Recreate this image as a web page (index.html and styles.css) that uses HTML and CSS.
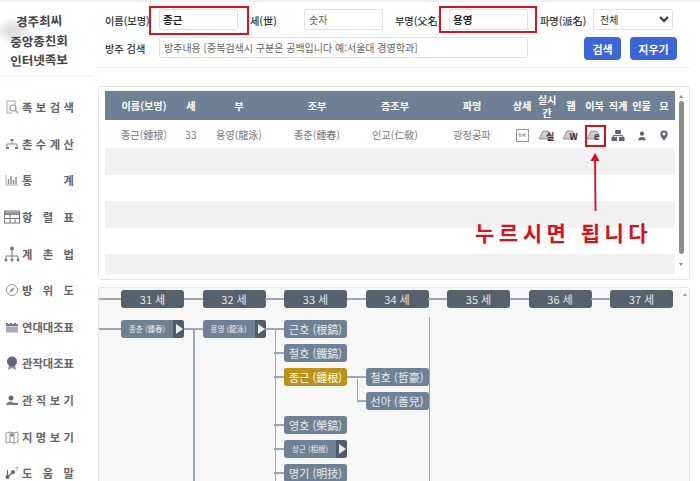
FILE: index.html
```html
<!DOCTYPE html>
<html lang="ko">
<head>
<meta charset="utf-8">
<title>인터넷족보</title>
<link rel="stylesheet" href="styles.css">
</head>
<body>
<div class="page">
  <aside class="side">
    <div class="logo">
      <span class="smudge"></span>
      <p class="logo-line">경주최씨</p>
      <p class="logo-line">중앙종친회</p>
      <p class="logo-line">인터넷족보</p>
    </div>
    <nav class="menu">
      <a class="item"><svg class="ico" viewBox="0 0 14 14"><path d="M2 1h8v5M2 1v12h5" fill="none" stroke="#aaa" stroke-width="1"/><circle cx="8" cy="8" r="3" fill="none" stroke="#999" stroke-width="1.2"/><path d="M10 10l3 3" stroke="#999" stroke-width="1.4"/></svg><span class="lab">족 보 검 색</span></a>
      <a class="item"><svg class="ico" viewBox="0 0 14 14"><path d="M7 3v4M2 11V7h10v4" fill="none" stroke="#888" stroke-width="1"/><rect x="5.500" y="2" width="3" height="2" fill="#777"/><rect x="1" y="10" width="3" height="2" fill="#777"/><rect x="10" y="10" width="3" height="2" fill="#777"/></svg><span class="lab">촌 수 계 산</span></a>
      <a class="item"><svg class="ico" viewBox="0 0 14 14"><path d="M1 2v10h12" fill="none" stroke="#aaa"/><path d="M3.500 11V6M6 11V3M8.500 11V7M11 11V4" stroke="#889" stroke-width="1.400"/></svg><span class="lab">통 계</span></a>
      <a class="item"><svg class="ico ico-w" viewBox="0 0 16 14"><rect x=".5" y="1" width="15" height="12" fill="#fff" stroke="#777"/><path d="M.5 4.500h15M.5 8.500h15M6 4.500V13M11 8.500V13" stroke="#777" fill="none"/><rect x="1" y="1.500" width="14" height="3" fill="#999"/></svg><span class="lab">항 렬 표</span></a>
      <a class="item"><svg class="ico ico-w" viewBox="0 0 16 16"><circle cx="8" cy="2.500" r="2" fill="#778"/><path d="M8 4v6M2 13v-3h12v3M8 10v3" fill="none" stroke="#778"/><circle cx="2" cy="14" r="1.500" fill="#778"/><circle cx="8" cy="14" r="1.500" fill="#778"/><circle cx="14" cy="14" r="1.500" fill="#778"/></svg><span class="lab">계 촌 법</span></a>
      <a class="item"><svg class="ico" viewBox="0 0 14 14"><circle cx="7" cy="7" r="5.500" fill="none" stroke="#999"/><path d="M10 4L8 8 4 10 6 6z" fill="#999"/></svg><span class="lab">방 위 도</span></a>
      <a class="item"><svg class="ico" viewBox="0 0 14 14"><path d="M1 6V3h2v1h2V3h2v1h2V3h2v1h2v2z" fill="#778"/><rect x="1" y="6.500" width="12" height="6" fill="#aab"/></svg><span class="lab">연대대조표</span></a>
      <a class="item"><svg class="ico" viewBox="0 0 14 14"><path d="M4 8l-1 6 4-2 4 2-1-6z" fill="#8a97a5"/><circle cx="7" cy="5.500" r="5" fill="#667"/></svg><span class="lab">관작대조표</span></a>
      <a class="item"><svg class="ico" viewBox="0 0 14 14"><circle cx="6" cy="5" r="2.500" fill="#667"/><path d="M1 12c0-2 3-3.500 5-3.500l2 1 5 .5v2z" fill="#778"/></svg><span class="lab">관 직 보 기</span></a>
      <a class="item"><svg class="ico" viewBox="0 0 14 14"><path d="M1 3l4-1 4 1 4-1v10l-4 1-4-1-4 1zM5 2v10M9 3v10" fill="none" stroke="#999"/><circle cx="7" cy="5" r="1.800" fill="#888"/></svg><span class="lab">지 명 보 기</span></a>
      <a class="item"><svg class="ico" viewBox="0 0 14 14"><circle cx="2.500" cy="11" r="2" fill="#667"/><circle cx="8" cy="6" r="2" fill="#667"/><path d="M2.500 4v7M2.500 11L8 6" stroke="#667" stroke-width="1.200"/><text class="help" x="10" y="5">?</text></svg><span class="lab">도 움 말</span></a>
    </nav>
  </aside>

  <main class="main">
    <form class="search">
      <label class="fl first">이름(보명)</label>
      <span class="hl hl-a"><input class="inp inp-b" value="종근"></span>
      <label class="fl">세(世)</label>
      <input class="inp" placeholder="숫자">
      <label class="fl">부명(父名)</label>
      <span class="hl hl-b"><input class="inp inp-b" value="용영"></span>
      <label class="fl">파명(派名)</label>
      <select class="sel"><option>전체</option></select>
      <label class="fl first">방주 검색</label>
      <input class="inp wide" placeholder="방주내용 [중복검색시 구분은 공백입니다 예:서울대 경영학과]">
      <div class="btns">
        <button type="button" class="btn btn-s">검색</button>
        <button type="button" class="btn btn-c">지우기</button>
      </div>
    </form>

    <section class="card result">
      <div class="scroll">
        <table class="tbl">
          <colgroup>
            <col class="w78"><col class="w16"><col class="w80"><col class="w76"><col class="w80"><col class="w74"><col class="w26"><col class="w24"><col class="w24"><col class="w23"><col class="w24"><col class="w23"><col class="w22">
          </colgroup>
          <thead>
            <tr><th>이름(보명)</th><th>세</th><th>부</th><th>조부</th><th>증조부</th><th>파명</th><th>상세</th><th>실시간</th><th>웹</th><th>이북</th><th>직계</th><th>인물</th><th>묘</th></tr>
          </thead>
          <tbody>
            <tr class="first-row">
              <td>종근(鍾根)</td><td>33</td><td>용영(龍泳)</td><td>종춘(鍾春)</td><td>인교(仁敎)</td><td>광정공파</td>
              <td><span class="doc">상세</span></td>
              <td><svg class="bk bk-book" viewBox="0 0 16 14"><path d="M0 11L4 3h5l3 3v5z" fill="#ccc" stroke="#777" stroke-width=".7"/><text class="bk-l" x="7" y="12">실</text></svg></td>
              <td><svg class="bk bk-book" viewBox="0 0 16 14"><path d="M0 11L4 3h5l3 3v5z" fill="#ccc" stroke="#777" stroke-width=".7"/><text class="bk-l" x="6.500" y="12">W</text></svg></td>
              <td><svg class="bk bk-book" viewBox="0 0 16 14"><path d="M0 11L4 3h5l3 3v5z" fill="#ccc" stroke="#777" stroke-width=".7"/><text class="bk-l" x="7" y="12">e</text></svg></td>
              <td><svg class="bk" viewBox="0 0 14 14"><rect x="4" y="1" width="6" height="4.500" fill="#5c6673"/><path d="M2 9V7h10v2" fill="none" stroke="#5c6673"/><rect y="8.500" width="6" height="4.500" fill="#5c6673"/><rect x="8" y="8.500" width="6" height="4.500" fill="#5c6673"/></svg></td>
              <td><svg class="bk" viewBox="0 0 14 14"><circle cx="7" cy="5" r="2.300" fill="#5c6673"/><path d="M3 12c0-2.500 1.800-3.500 4-3.500s4 1 4 3.500z" fill="#5c6673"/></svg></td>
              <td><svg class="bk" viewBox="0 0 14 14"><path d="M7 1.500a4 4 0 0 1 4 4C11 8.500 7 12.500 7 12.500S3 8.500 3 5.500a4 4 0 0 1 4-4z" fill="#5c6673"/><circle cx="7" cy="5.500" r="1.600" fill="#fff"/></svg></td>
            </tr>
            <tr class="empty"><td colspan="13"></td></tr>
            <tr class="empty"><td colspan="13"></td></tr>
            <tr class="empty"><td colspan="13"></td></tr>
            <tr class="empty"><td colspan="13"></td></tr>
            <tr class="empty"><td colspan="13"></td></tr>
          </tbody>
        </table>
      </div>
      <div class="sbar"><span class="arr up"></span><span class="thumb"></span><span class="arr down"></span></div>
    </section>

    <section class="card tree">
      <div class="tree-grid">
        <div class="yr">31 세</div><div class="yr">32 세</div><div class="yr">33 세</div><div class="yr">34 세</div><div class="yr">35 세</div><div class="yr">36 세</div><div class="yr">37 세</div>
      </div>
      <div class="node-grid">
        <span class="vl vl1"></span><span class="vl vl2"></span><span class="vl vl3"></span><span class="vl vl4"></span>
        <div class="nd more c1 r1"><span class="nm">종춘 (鍾春)</span><i class="go"></i></div>
        <div class="nd more c2 r1"><span class="nm">용영 (龍泳)</span><i class="go"></i></div>
        <div class="nd c3 r1">근호 (根鎬)</div>
        <div class="nd c3 r2">철호 (鐵鎬)</div>
        <div class="nd gold c3 r3">종근 (鍾根)</div>
        <div class="nd c4 r3">철호 (哲豪)</div>
        <div class="nd c4 r4">선아 (善兒)</div>
        <div class="nd c3 r5">영호 (榮鎬)</div>
        <div class="nd more c3 r6"><span class="nm">상근 (相根)</span><i class="go"></i></div>
        <div class="nd c3 r7">명기 (明技)</div>
      </div>
      <span class="tree-up"></span>
    </section>

    <div class="callout">
      <span class="ebook-box"></span>
      <svg class="arrow" viewBox="0 0 12 58"><path d="M6 6l.5 52" stroke="#d8101a" stroke-width="1.800" fill="none"/><path d="M6 0L1.500 8h9z" fill="#d8101a"/></svg>
      <p class="note">누르시면 됩니다</p>
    </div>
  </main>
</div>
</body>
</html>
```
FILE: styles.css
```css
*, *::before, *::after { box-sizing: border-box; }
html, body { margin: 0; padding: 0; background: #fff; }
body {
  width: 700px; height: 481px; overflow: hidden;
  font-family: "Noto Sans CJK KR", "Noto Sans", sans-serif;
  color: #444;
  border-top: 2px solid #f1f1f1;
}
.page { display: flex; height: 479px; }

/* sidebar */
.side { width: 92px; flex: none; }
.logo {
  position: relative; height: 75px; padding: 9px 0 0 9px;
  border-bottom: 2px solid #f2f2f2;
}
.smudge {
  position: absolute; left: 0; top: 20px; width: 26px; height: 18px;
  background: #ccc; border-radius: 50%; filter: blur(4px); opacity: .7;
}
.logo-line {
  position: relative; margin: 0; height: 19.500px; line-height: 19.500px;
  font-size: 12.500px; font-weight: 700; color: #444; text-align: center; width: 60px;
  white-space: nowrap; transform: rotate(-2deg);
}
.menu { display: flex; flex-direction: column; padding: 12px 0 0 5px; }
.item { display: flex; align-items: center; height: 36.600px; gap: 3px; color: #555; }
.ico { width: 14px; height: 14px; flex: none; }
.ico-w { width: 16px; height: 16px; margin-left: -1px; margin-right: -1px; }
.help { font-size: 6px; fill: #777; font-family: "Liberation Sans", sans-serif; }
.lab {
  width: 52px; font-size: 11.300px; font-weight: 700; color: #666; line-height: 16px;
  text-align: justify; text-align-last: justify;
}

/* main */
.main { position: relative; flex: 1; padding-left: 6px; min-width: 0; }
.search {
  display: grid; margin-right: 10px; padding: 7px 0 0 7px; height: 66px;
  grid-template-columns: 54px 79px 66px 79px 66px 79px 65px 84px;
  grid-auto-rows: 21px; row-gap: 7px;
  border-bottom: 1px solid #f0f0f0;
}
.fl { font-size: 10.200px; font-weight: 500; color: #333; line-height: 23px; padding-left: 12px; white-space: nowrap; }
.fl.first { padding-left: 0; }
.inp {
  display: block; width: 79px; height: 21px; padding: 0 4px; margin: 0;
  border: 1px solid #e2e2e2; border-radius: 2px; background: #fff;
  font: 10px "Noto Sans CJK KR", sans-serif; color: #333; outline: 0;
}
.inp::placeholder { color: #666; opacity: 1; }
.inp-b { font-weight: 700; font-size: 10.500px; color: #222; padding-left: 3px; }
.wide { grid-column: 2 / span 5; width: 369px; }
.hl { position: relative; display: block; width: 79px; height: 21px; }
.hl::after { content: ""; position: absolute; border: 2px solid #d8141c; }
.hl-a::after { left: -10px; top: -3px; width: 100px; height: 29px; }
.hl-b::after { left: -10px; top: -3px; width: 98px; height: 27px; }
.sel {
  width: 80px; height: 21px; padding: 0 2px; border: 1px solid #e2e2e2; border-radius: 2px;
  background: #fff; font: 10px "Noto Sans CJK KR", sans-serif; color: #333;
}
.btns { grid-column: 7 / span 2; display: flex; justify-content: flex-end; gap: 9px; height: 23px; }
.btn {
  height: 23px; padding: 0; border: 0; border-radius: 4px; color: #fff;
  font: 700 11px "Noto Sans CJK KR", sans-serif; background: #3c65d8;
}
.btn-s { width: 37px; }
.btn-c { width: 47px; }

/* cards */
.card { border: 1px solid #e4e4e4; border-radius: 3px; background: #fff; width: 592px; }
.result { display: flex; height: 194px; margin-top: 18px; padding: 4px 0 5px 6px; }
.scroll { width: 571px; height: 183px; overflow: hidden; flex: none; }
.tbl { width: 570px; table-layout: fixed; border-collapse: collapse; }
.w78 { width: 78px; } .w16 { width: 16px; } .w80 { width: 80px; } .w76 { width: 76px; }
.w74 { width: 74px; } .w26 { width: 26px; } .w24 { width: 24px; } .w23 { width: 23px; } .w22 { width: 22px; }
.tbl th {
  height: 29px; padding: 0; background: #6e8093; color: #fff;
  font-size: 10.200px; font-weight: 700; line-height: 13px;
}
.tbl td { padding: 0; text-align: center; font-size: 10.200px; color: #7a7a7a; white-space: nowrap; }
.first-row td { height: 28px; }
.empty td { height: 26.500px; background: #f1f1f1; }
.empty:nth-child(odd) td { background: #fff; }
.doc {
  display: inline-block; width: 13px; height: 13px; border: 1px solid #999; vertical-align: middle;
  font-size: 4px; line-height: 11px; color: #555; background: #fff;
}
.bk { width: 14px; height: 13px; vertical-align: middle; }
.bk-book { width: 16px; height: 14px; }
.bk-l { font: 700 9px "Noto Sans CJK KR", sans-serif; fill: #333; }

.sbar { flex: none; width: 10px; display: flex; flex-direction: column; align-items: center; }
.thumb { width: 5px; height: 153px; background: #8c8c8c; border-radius: 3px; margin: 3px 0 9px; }
.arr { width: 0; height: 0; border-left: 2.500px solid transparent; border-right: 2.500px solid transparent; }
.up { border-bottom: 3px solid #888; margin-top: 4px; }
.down { border-top: 3px solid #888; }

/* tree */
.tree {
  position: relative; height: 200px; margin-top: 7px; padding: 2px 0 0 22px; background: #f7f7f7;
  overflow: hidden;
}
.tree-grid, .node-grid {
  position: relative; display: grid; column-gap: 18.500px;
  grid-template-columns: repeat(7, 63px);
}
.yr {
  position: relative; height: 18px; line-height: 18px; text-align: center;
  background: #56616e; border-radius: 3px; color: #e8e8e8; font-size: 11px;
}
.yr::before {
  content: ""; position: absolute; left: -19px; top: 8px; width: 19px; height: 1.500px; background: #9aa8b5;
}
.yr:first-child::before { left: -22px; width: 22px; }
.node-grid { margin-top: 12px; grid-auto-rows: 18px; row-gap: 6px; }
.nd {
  position: relative; display: flex; align-items: center; justify-content: center;
  height: 18px; line-height: 14px; background: #6f8295; border-radius: 3px; color: #e9edf0; font-size: 11px; white-space: nowrap;
}
.nd::before {
  content: ""; position: absolute; left: -10px; top: 8px; width: 10px; height: 1.500px; background: #9aa8b5;
}
.nd.c1::before { left: -22px; width: 22px; }
.nd.c2::before, .c3.r1::before, .c4.r3::before { left: -19px; width: 19px; }
.nd.c4.r4::before { left: -9px; width: 9px; }
.gold { background: #bd9216; color: #fff; }
.more { justify-content: flex-start; }
.nm { flex: 1; text-align: center; font-size: 7.500px; }
.go {
  position: relative; align-self: stretch; width: 11px; background: #4f5c6b; border-radius: 0 3px 3px 0;
}
.go::after {
  content: ""; position: absolute; left: 3px; top: 4px;
  border-left: 7px solid #e9edf0; border-top: 5px solid transparent; border-bottom: 5px solid transparent;
}
.c1 { grid-column: 1; } .c2 { grid-column: 2; } .c3 { grid-column: 3; } .c4 { grid-column: 4; }
.r1 { grid-row: 1; } .r2 { grid-row: 2; } .r3 { grid-row: 3; } .r4 { grid-row: 4; }
.r5 { grid-row: 5; } .r6 { grid-row: 6; } .r7 { grid-row: 7; }
.vl { position: absolute; width: 1.500px; background: #9aa8b5; }
.vl1 { left: 72px; top: 8px; height: 170px; }
.vl2 { left: 153.500px; top: 8px; height: 170px; }
.vl3 { left: 235.500px; top: 56px; height: 24px; }
.vl4 { left: 307.500px; top: -3px; height: 170px; }
.tree-up {
  position: absolute; left: 584px; top: 5px; width: 0; height: 0;
  border-left: 2.500px solid transparent; border-right: 2.500px solid transparent; border-bottom: 3px solid #999;
}

/* annotation layered over the table */
.callout { position: absolute; left: 0; top: 0; width: 100%; height: 100%; pointer-events: none; }
.ebook-box { position: absolute; left: 493px; top: 123px; width: 21px; height: 22px; border: 2px solid #d8101a; }
.arrow { position: absolute; left: 497px; top: 151px; width: 12px; height: 58px; }
.note {
  position: absolute; left: 383px; top: 216px; margin: 0; white-space: nowrap;
  font-size: 21px; line-height: 28px; font-weight: 700; color: #d8101a; letter-spacing: 4.500px;
}
```
